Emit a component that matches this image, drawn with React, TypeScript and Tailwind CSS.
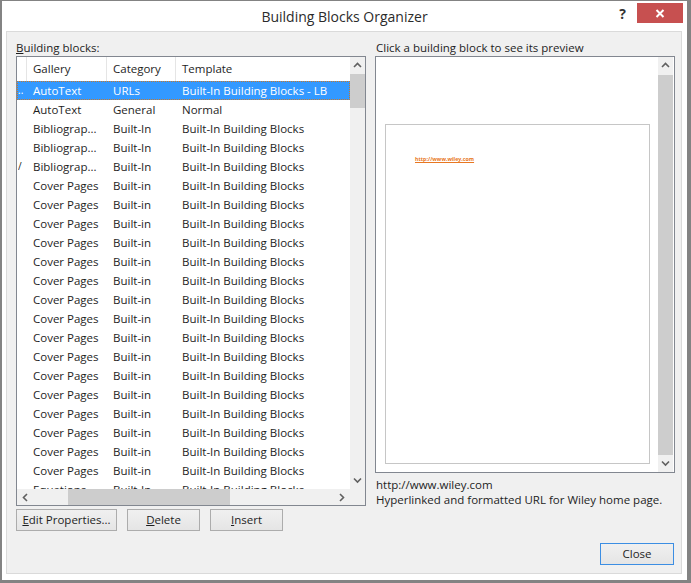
import React from "react";

type Row = { mark: string; gallery: string; category: string; template: string; selected?: boolean };

const rows: Row[] = [
    { mark: "..", gallery: "AutoText", category: "URLs", template: "Built-In Building Blocks - LB", selected: true },
    { mark: "", gallery: "AutoText", category: "General", template: "Normal" },
    { mark: "", gallery: "Bibliograp...", category: "Built-In", template: "Built-In Building Blocks" },
    { mark: "", gallery: "Bibliograp...", category: "Built-In", template: "Built-In Building Blocks" },
    { mark: "/", gallery: "Bibliograp...", category: "Built-In", template: "Built-In Building Blocks" },
    ...Array.from({ length: 16 }, () => ({
        mark: "",
        gallery: "Cover Pages",
        category: "Built-in",
        template: "Built-In Building Blocks",
    })),
    { mark: ".", gallery: "Equations", category: "Built-In", template: "Built-In Building Blocks" },
];

function Chevron({ dir }: { dir: "up" | "down" | "left" | "right" }) {
    const pts = {
        up: "1,5 4.5,1.5 8,5",
        down: "1,1.5 4.5,5 8,1.5",
        left: "5,1 1.5,4.5 5,8",
        right: "2,1 5.5,4.5 2,8",
    }[dir];
    const horiz = dir === "up" || dir === "down";
    return (
        <svg width={horiz ? 9 : 7} height={horiz ? 7 : 9} viewBox={horiz ? "0 0 9 7" : "0 0 7 9"}>
            <polyline points={pts} fill="none" stroke="#606060" strokeWidth="1.6" />
        </svg>
    );
}

function Btn({ children, className = "" }: { children: React.ReactNode; className?: string }) {
    return (
        <button
            className={
                "h-[22px] border bg-linear-to-b from-[#f0f0f0] to-[#e5e5e5] text-[11.5px] text-[#1e1e1e] flex items-center justify-center " +
                className
            }
        >
            {children}
        </button>
    );
}

export default function App() {
    return (
        <div className="w-[691px] h-[583px] bg-[#838383] pt-[1px] pl-[2px] pr-[4px] pb-[3px] font-['Open_Sans',sans-serif] text-[11.5px] text-[#1e1e1e]">
            <div className="h-full bg-white flex flex-col">
                {/* Title bar */}
                <div className="h-[30px] grid grid-cols-[1fr_auto_1fr]">
                    <div />
                    <div className="pt-[5px] text-[14px] text-[#2b2b2b] leading-[22px]">Building Blocks Organizer</div>
                    <div className="flex justify-end items-start">
                        <span className="mt-[4px] mr-[11px] text-[14px] font-bold leading-[18px] text-[#333]">?</span>
                        <div className="mt-[2px] mr-[4px] w-[46px] h-[20px] bg-[#c75050] flex items-center justify-center">
                            <svg width="10" height="9" viewBox="0 0 10 9">
                                <path d="M1.5 1 L8.5 8 M8.5 1 L1.5 8" stroke="white" strokeWidth="2" />
                            </svg>
                        </div>
                    </div>
                </div>

                {/* Content */}
                <div className="flex-1 ml-[4px] mr-[5px] mb-[6px] border border-[#dadada] bg-[#f0f0f0] pl-[9px] pr-[6px] pt-[7px] pb-[8px] flex flex-col">
                    <div className="flex gap-[9px]">
                        {/* Left column */}
                        <div className="w-[350px] flex flex-col">
                            <div className="h-[17px] leading-[17px]">
                                <span className="underline">B</span>uilding blocks:
                            </div>
                            <div className="h-[450px] border border-[#828790] bg-white flex flex-col">
                                <div className="h-[432px] flex">
                                    <div className="w-[333px] overflow-hidden">
                                        <div className="h-[24px] flex bg-white">
                                            <div className="w-[10px] border-r border-[#e5e5e5]" />
                                            <div className="w-[80px] border-r border-[#e5e5e5] pl-[6px] leading-[24px]">Gallery</div>
                                            <div className="w-[69px] border-r border-[#e5e5e5] pl-[6px] leading-[24px]">Category</div>
                                            <div className="flex-1 pl-[6px] leading-[24px]">Template</div>
                                        </div>
                                        {rows.map((r, i) => (
                                            <div
                                                key={i}
                                                className={
                                                    "h-[19px] flex leading-[17px] whitespace-nowrap border border-dotted " +
                                                    (r.selected
                                                        ? "bg-[#3399ff] text-white border-[#c8782a]"
                                                        : "border-transparent")
                                                }
                                            >
                                                <div className="w-[9px] overflow-hidden text-[10px]">{r.mark}</div>
                                                <div className="w-[80px] pl-[6px]">{r.gallery}</div>
                                                <div className="w-[69px] pl-[6px]">{r.category}</div>
                                                <div className="flex-1 pl-[6px]">{r.template}</div>
                                            </div>
                                        ))}
                                    </div>
                                    {/* vertical scrollbar */}
                                    <div className="w-[15px] bg-[#f0f0f0] flex flex-col">
                                        <div className="h-[17px] flex items-center justify-center">
                                            <Chevron dir="up" />
                                        </div>
                                        <div className="h-[34px] bg-[#cdcdcd]" />
                                        <div className="flex-1" />
                                        <div className="h-[17px] flex items-center justify-center">
                                            <Chevron dir="down" />
                                        </div>
                                    </div>
                                </div>
                                {/* horizontal scrollbar */}
                                <div className="h-[16px] flex bg-[#f0f0f0]">
                                    <div className="w-[333px] flex items-center">
                                        <div className="w-[17px] flex justify-center">
                                            <Chevron dir="left" />
                                        </div>
                                        <div className="ml-[34px] w-[162px] h-full bg-[#cdcdcd]" />
                                        <div className="flex-1" />
                                        <div className="w-[17px] flex justify-center">
                                            <Chevron dir="right" />
                                        </div>
                                    </div>
                                    <div className="w-[15px]" />
                                </div>
                            </div>
                            <div className="mt-[3px] flex gap-[10px]">
                                <Btn className="w-[101px] border-[#acacac]">
                                    <span className="underline">E</span>dit Properties...
                                </Btn>
                                <Btn className="w-[73px] border-[#acacac]">
                                    <span className="underline">D</span>elete
                                </Btn>
                                <Btn className="w-[73px] border-[#acacac]">
                                    <span className="underline">I</span>nsert
                                </Btn>
                            </div>
                        </div>

                        {/* Right column */}
                        <div className="w-[300px] flex flex-col">
                            <div className="h-[17px] leading-[17px] pl-[1px]">Click a building block to see its preview</div>
                            <div className="h-[417px] border border-[#828790] bg-white flex">
                                <div className="flex-1 pl-[9px] pr-[8px] pt-[67px] pb-[8px]">
                                    <div className="h-full border border-[#c6c6c6] bg-white pl-[29px] pt-[30px]">
                                        <span className="text-[5.3px] font-bold text-[#e87722] underline leading-[8px] block">
                                            http://www.wiley.com
                                        </span>
                                    </div>
                                </div>
                                <div className="w-[15px] mr-[1px] bg-[#f0f0f0] flex flex-col">
                                    <div className="h-[17px] flex items-center justify-center">
                                        <Chevron dir="up" />
                                    </div>
                                    <div className="flex-1 mt-[1px] bg-[#cdcdcd]" />
                                    <div className="h-[17px] flex items-center justify-center">
                                        <Chevron dir="down" />
                                    </div>
                                </div>
                            </div>
                            <div className="mt-[4px] leading-[15px] pl-[1px]">http://www.wiley.com</div>
                            <div className="leading-[15px] pl-[1px]">Hyperlinked and formatted URL for Wiley home page.</div>
                        </div>
                    </div>
                    <div className="flex-1" />
                    <div className="flex justify-end pr-[1px]">
                        <Btn className="w-[74px] border-[#3c8ee3]">Close</Btn>
                    </div>
                </div>
            </div>
        </div>
    );
}
